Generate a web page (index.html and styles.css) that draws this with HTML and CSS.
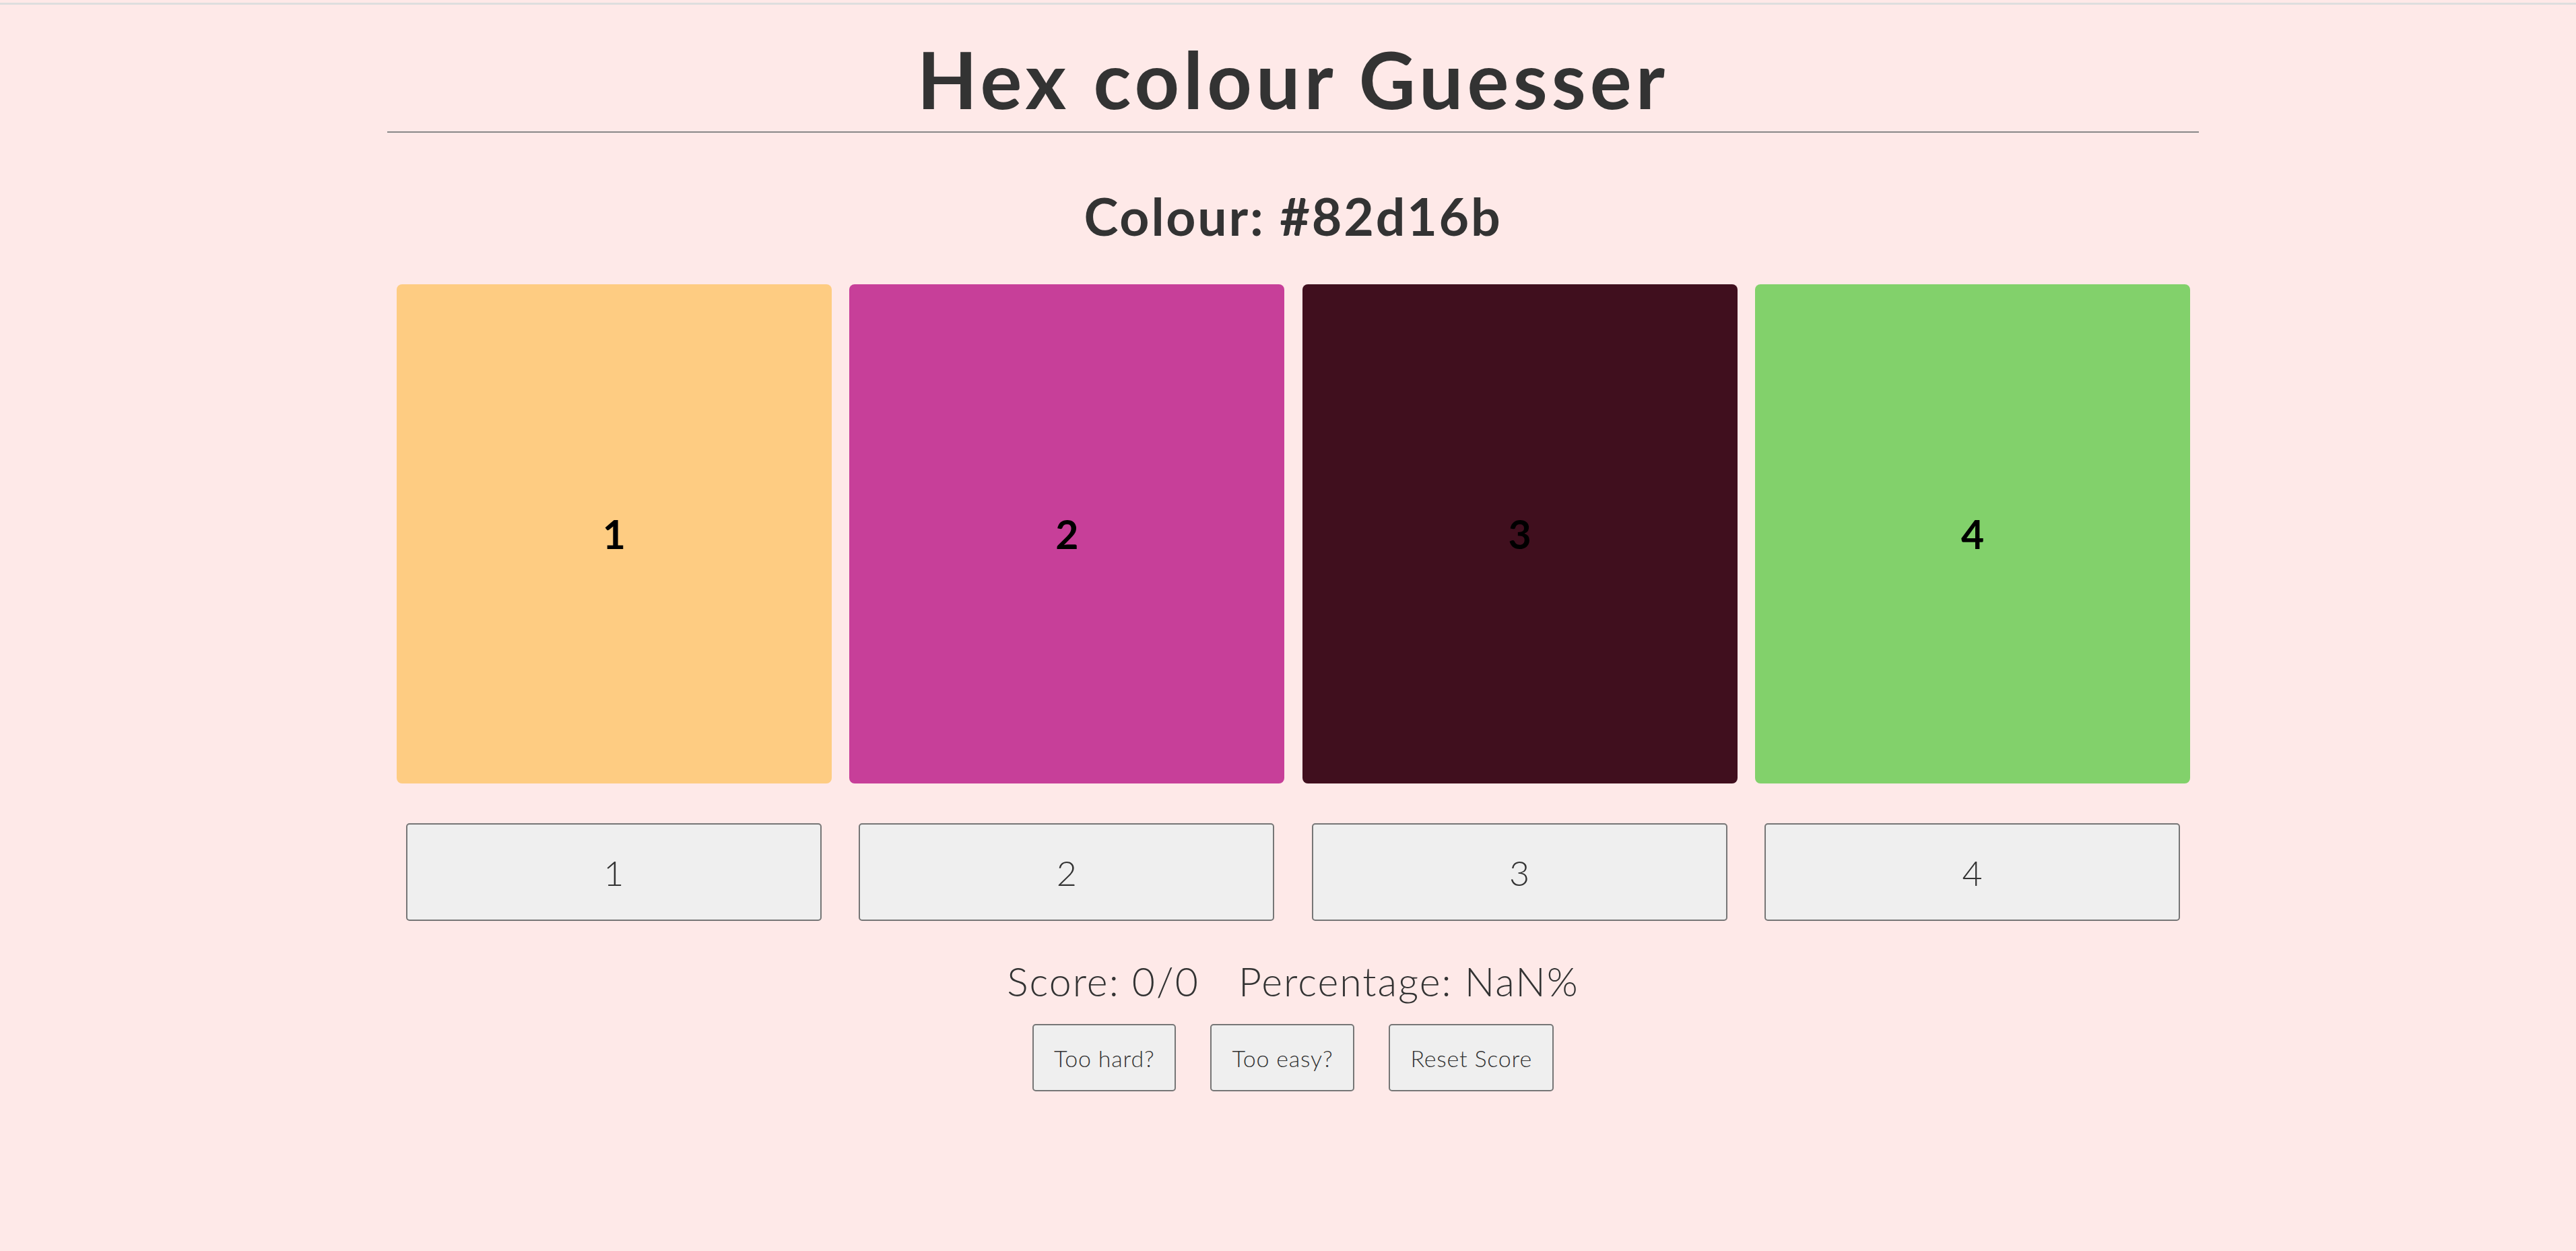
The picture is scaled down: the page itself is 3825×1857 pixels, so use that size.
FILE: index.html
```html
<!DOCTYPE html>
<html lang="en">
<head>
<meta charset="utf-8">
<title>Hex colour Guesser</title>
<link rel="stylesheet" href="styles.css">
</head>
<body>
<div class="topbar"></div>
<div class="page">
  <h1 class="title">Hex colour Guesser</h1>
  <hr class="rule">
  <h2 class="target">Colour: #82d16b</h2>
  <div class="swatches">
    <div class="swatch" style="background:#fecc82">1</div>
    <div class="swatch" style="background:#c73f99">2</div>
    <div class="swatch" style="background:#400f1e">3</div>
    <div class="swatch" style="background:#82d16b">4</div>
  </div>
  <div class="choices">
    <button class="choice">1</button>
    <button class="choice">2</button>
    <button class="choice">3</button>
    <button class="choice">4</button>
  </div>
  <p class="score"><span class="score-part">Score: 0/0</span><span class="score-part">Percentage: NaN%</span></p>
  <div class="controls">
    <button class="control">Too hard?</button>
    <button class="control">Too easy?</button>
    <button class="control">Reset Score</button>
  </div>
</div>
</body>
</html>
```

FILE: styles.css
```css
html, body {
  margin: 0;
  padding: 0;
  background: #fee9e8;
}
body {
  padding-left: 15px;
  font-family: Lato, "Noto Sans", sans-serif;
  color: #333333;
  min-height: 1857px;
  box-sizing: border-box;
}
.topbar {
  margin: 4px 0 0 -15px;
  height: 3px;
  background: #dedede;
}
.page {
  width: 2690px;
  margin: 0 auto;
}
.title {
  margin: 41px 0 0;
  font-size: 116px;
  line-height: 139px;
  font-weight: 700;
  text-align: center;
  letter-spacing: 6.1px;
}
.rule {
  margin: 8px 0 0;
  border: none;
  height: 2px;
  background: #888888;
}
.target {
  margin: 77px 0 0;
  font-size: 77px;
  line-height: 92px;
  font-weight: 700;
  text-align: center;
  letter-spacing: 2.8px;
}
.swatches {
  margin-top: 56px;
  padding: 0 13px 0 14px;
  display: grid;
  grid-template-columns: repeat(4, 1fr);
  column-gap: 26.5px;
}
.swatch {
  height: 741px;
  border-radius: 8px;
  display: flex;
  align-items: center;
  justify-content: center;
  color: #000000;
  font-weight: 700;
  font-size: 59px;
}
.choices {
  margin-top: 59px;
  padding: 0 13px 0 14px;
  display: grid;
  grid-template-columns: repeat(4, 1fr);
  column-gap: 26.5px;
}
.choice {
  margin: 0 15px 0 14px;
  height: 145px;
  background: #efefef;
  border: 2px solid #767676;
  border-radius: 5px;
  font-family: Lato, "Noto Sans", sans-serif;
  font-weight: 300;
  font-size: 52px;
  color: #333333;
  padding: 0;
}
.score {
  margin: 54px 0 0;
  font-size: 59px;
  line-height: 71px;
  font-weight: 300;
  text-align: center;
  letter-spacing: 2px;
}
.score-part + .score-part {
  margin-left: 58px;
}
.controls {
  margin-top: 28px;
  display: flex;
  justify-content: center;
  gap: 51px;
}
.control {
  height: 100px;
  padding: 0 30px;
  background: #efefef;
  border: 2px solid #767676;
  border-radius: 5px;
  font-family: Lato, "Noto Sans", sans-serif;
  font-weight: 300;
  font-size: 34px;
  letter-spacing: 0.8px;
  color: #333333;
}
```
